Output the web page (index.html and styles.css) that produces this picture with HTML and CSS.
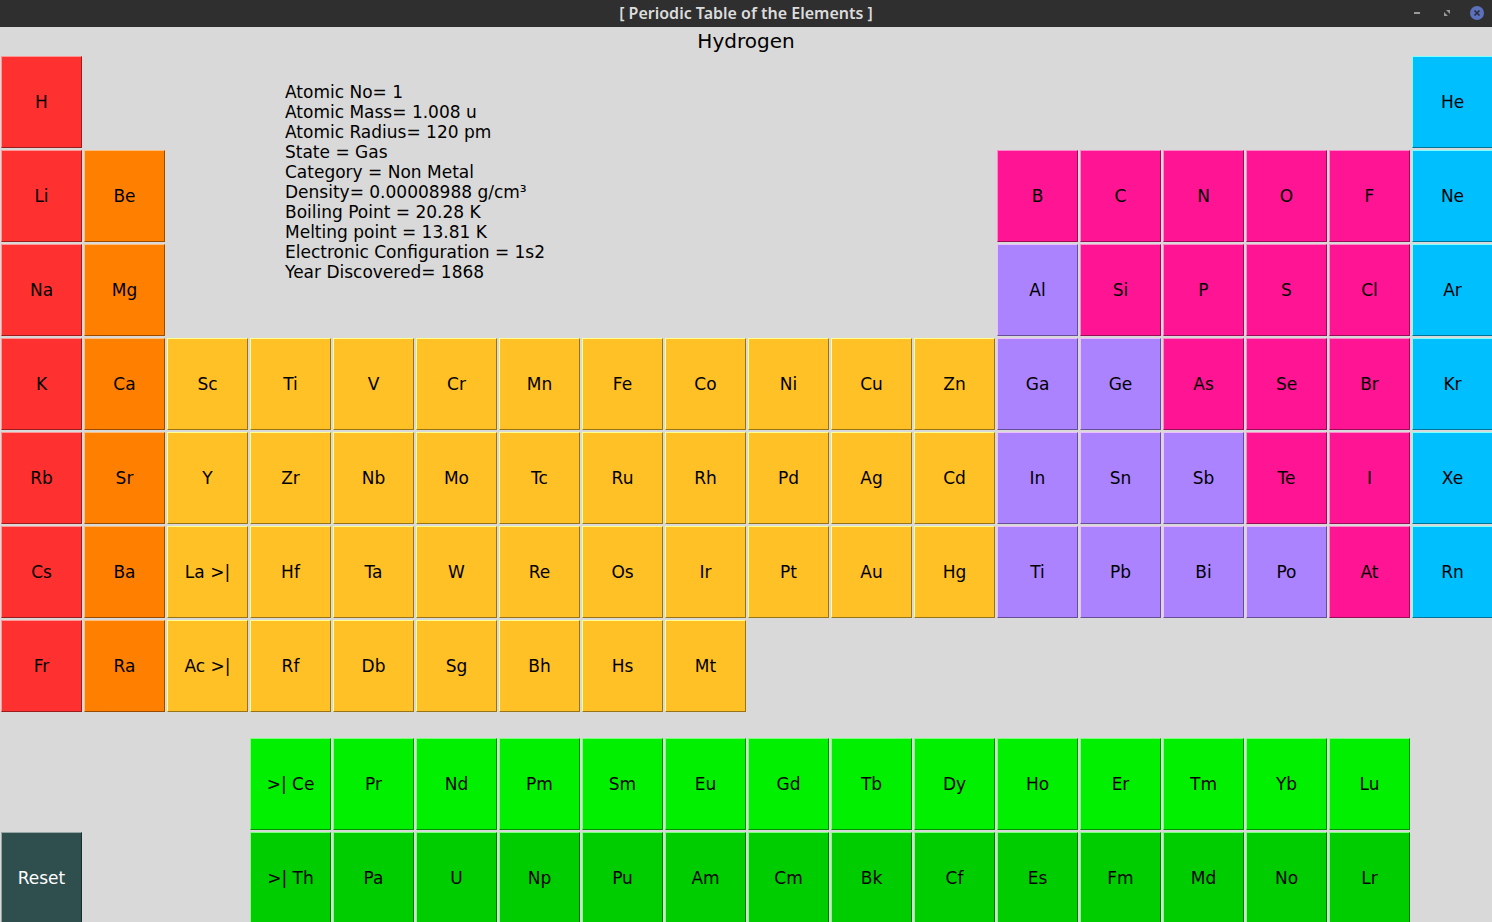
FILE: index.html
```html
<!DOCTYPE html>
<html lang="en">
<head>
<meta charset="utf-8">
<title>Periodic Table of the Elements</title>
<link rel="stylesheet" href="styles.css">
</head>
<body>
<header class="titlebar">
  <span class="title">[ Periodic Table of the Elements ]</span>
  <div class="controls">
    <button type="button" class="control" aria-label="Minimize"><svg width="14" height="14" viewBox="0 0 14 14"><path d="M4 6h6v2H4z" fill="#999"/></svg></button>
    <button type="button" class="control" aria-label="Maximize"><svg width="14" height="14" viewBox="0 0 14 14"><path d="M6 4h4v4zM4 6l4 4H4z" fill="#999"/></svg></button>
    <button type="button" class="control" aria-label="Close"><svg width="14" height="14" viewBox="0 0 14 14"><circle cx="7" cy="7" r="7" fill="#5c71bd"/><path d="M4.500 4.500l5 5M9.500 4.500l-5 5" stroke="#2a2d3a" stroke-width="1.700"/></svg></button>
  </div>
</header>
<main class="content">
  <h1 class="element-name">Hydrogen</h1>
  <section class="table">
    <div class="info">
      <p>Atomic No= 1</p>
      <p>Atomic Mass= 1.008 u</p>
      <p>Atomic Radius= 120 pm</p>
      <p>State = Gas</p>
      <p>Category = Non Metal</p>
      <p>Density= 0.00008988 g/cm³</p>
      <p>Boiling Point = 20.28 K</p>
      <p>Melting point = 13.81 K</p>
      <p>Electronic Configuration = 1s2</p>
      <p>Year Discovered= 1868</p>
    </div>
    <button type="button" class="cell alkali">H</button>
    <button type="button" class="cell noble col-18">He</button>

    <button type="button" class="cell alkali">Li</button>
    <button type="button" class="cell earth">Be</button>
    <button type="button" class="cell nonmetal col-13">B</button>
    <button type="button" class="cell nonmetal">C</button>
    <button type="button" class="cell nonmetal">N</button>
    <button type="button" class="cell nonmetal">O</button>
    <button type="button" class="cell nonmetal">F</button>
    <button type="button" class="cell noble">Ne</button>

    <button type="button" class="cell alkali">Na</button>
    <button type="button" class="cell earth">Mg</button>
    <button type="button" class="cell metal col-13">Al</button>
    <button type="button" class="cell nonmetal">Si</button>
    <button type="button" class="cell nonmetal">P</button>
    <button type="button" class="cell nonmetal">S</button>
    <button type="button" class="cell nonmetal">Cl</button>
    <button type="button" class="cell noble">Ar</button>

    <button type="button" class="cell alkali col-1">K</button>
    <button type="button" class="cell earth">Ca</button>
    <button type="button" class="cell transition">Sc</button>
    <button type="button" class="cell transition">Ti</button>
    <button type="button" class="cell transition">V</button>
    <button type="button" class="cell transition">Cr</button>
    <button type="button" class="cell transition">Mn</button>
    <button type="button" class="cell transition">Fe</button>
    <button type="button" class="cell transition">Co</button>
    <button type="button" class="cell transition">Ni</button>
    <button type="button" class="cell transition">Cu</button>
    <button type="button" class="cell transition">Zn</button>
    <button type="button" class="cell metal">Ga</button>
    <button type="button" class="cell metal">Ge</button>
    <button type="button" class="cell nonmetal">As</button>
    <button type="button" class="cell nonmetal">Se</button>
    <button type="button" class="cell nonmetal">Br</button>
    <button type="button" class="cell noble">Kr</button>

    <button type="button" class="cell alkali">Rb</button>
    <button type="button" class="cell earth">Sr</button>
    <button type="button" class="cell transition">Y</button>
    <button type="button" class="cell transition">Zr</button>
    <button type="button" class="cell transition">Nb</button>
    <button type="button" class="cell transition">Mo</button>
    <button type="button" class="cell transition">Tc</button>
    <button type="button" class="cell transition">Ru</button>
    <button type="button" class="cell transition">Rh</button>
    <button type="button" class="cell transition">Pd</button>
    <button type="button" class="cell transition">Ag</button>
    <button type="button" class="cell transition">Cd</button>
    <button type="button" class="cell metal">In</button>
    <button type="button" class="cell metal">Sn</button>
    <button type="button" class="cell metal">Sb</button>
    <button type="button" class="cell nonmetal">Te</button>
    <button type="button" class="cell nonmetal">I</button>
    <button type="button" class="cell noble">Xe</button>

    <button type="button" class="cell alkali">Cs</button>
    <button type="button" class="cell earth">Ba</button>
    <button type="button" class="cell transition">La &gt;|</button>
    <button type="button" class="cell transition">Hf</button>
    <button type="button" class="cell transition">Ta</button>
    <button type="button" class="cell transition">W</button>
    <button type="button" class="cell transition">Re</button>
    <button type="button" class="cell transition">Os</button>
    <button type="button" class="cell transition">Ir</button>
    <button type="button" class="cell transition">Pt</button>
    <button type="button" class="cell transition">Au</button>
    <button type="button" class="cell transition">Hg</button>
    <button type="button" class="cell metal">Ti</button>
    <button type="button" class="cell metal">Pb</button>
    <button type="button" class="cell metal">Bi</button>
    <button type="button" class="cell metal">Po</button>
    <button type="button" class="cell nonmetal">At</button>
    <button type="button" class="cell noble">Rn</button>

    <button type="button" class="cell alkali">Fr</button>
    <button type="button" class="cell earth">Ra</button>
    <button type="button" class="cell transition">Ac &gt;|</button>
    <button type="button" class="cell transition">Rf</button>
    <button type="button" class="cell transition">Db</button>
    <button type="button" class="cell transition">Sg</button>
    <button type="button" class="cell transition">Bh</button>
    <button type="button" class="cell transition">Hs</button>
    <button type="button" class="cell transition">Mt</button>
  </section>
  <section class="table series">
    <button type="button" class="cell lanthanide col-4">&gt;| Ce</button>
    <button type="button" class="cell lanthanide">Pr</button>
    <button type="button" class="cell lanthanide">Nd</button>
    <button type="button" class="cell lanthanide">Pm</button>
    <button type="button" class="cell lanthanide">Sm</button>
    <button type="button" class="cell lanthanide">Eu</button>
    <button type="button" class="cell lanthanide">Gd</button>
    <button type="button" class="cell lanthanide">Tb</button>
    <button type="button" class="cell lanthanide">Dy</button>
    <button type="button" class="cell lanthanide">Ho</button>
    <button type="button" class="cell lanthanide">Er</button>
    <button type="button" class="cell lanthanide">Tm</button>
    <button type="button" class="cell lanthanide">Yb</button>
    <button type="button" class="cell lanthanide">Lu</button>

    <button type="button" class="cell reset col-1">Reset</button>
    <button type="button" class="cell actinide col-4">&gt;| Th</button>
    <button type="button" class="cell actinide">Pa</button>
    <button type="button" class="cell actinide">U</button>
    <button type="button" class="cell actinide">Np</button>
    <button type="button" class="cell actinide">Pu</button>
    <button type="button" class="cell actinide">Am</button>
    <button type="button" class="cell actinide">Cm</button>
    <button type="button" class="cell actinide">Bk</button>
    <button type="button" class="cell actinide">Cf</button>
    <button type="button" class="cell actinide">Es</button>
    <button type="button" class="cell actinide">Fm</button>
    <button type="button" class="cell actinide">Md</button>
    <button type="button" class="cell actinide">No</button>
    <button type="button" class="cell actinide">Lr</button>
  </section>
</main>
</body>
</html>
```
FILE: styles.css
```css
* { box-sizing: border-box; }

body {
  margin: 0;
  height: 100vh;
  overflow: hidden;
  background: #d9d9d9;
  color: #000;
  font-family: "DejaVu Sans", sans-serif;
  font-size: 17px;
}

.titlebar {
  display: grid;
  grid-template-columns: 1fr auto 1fr;
  align-items: center;
  height: 27px;
  padding: 0 8px;
  background: #2f2f2f;
}

.title {
  grid-column: 2;
  color: #dcdcdc;
  font-family: "Noto Sans", sans-serif;
  font-size: 16px;
  font-weight: 600;
  line-height: 27px;
}

.controls {
  display: flex;
  justify-content: flex-end;
  gap: 16px;
  padding-bottom: 1px;
}

.control {
  display: flex;
  padding: 0;
  border: 0;
  background: none;
}

.element-name {
  margin: 0;
  font-size: 20px;
  font-weight: 400;
  line-height: 29px;
  text-align: center;
}

.table {
  display: grid;
  grid-template-columns: repeat(18, minmax(0, 1fr));
  grid-auto-rows: 92px;
  gap: 2px;
  margin-left: 1px;
  margin-right: -1px;
}

.series { margin-top: 26px; }

.info {
  grid-column: 4 / 13;
  grid-row: 1 / 4;
  padding: 26px 0 0 35px;
}

.info p {
  margin: 0;
  line-height: 20px;
}

.cell {
  padding: 0;
  border: 1px solid;
  color: #000;
  font: inherit;
}

.col-1 { grid-column-start: 1; }
.col-4 { grid-column-start: 4; }
.col-13 { grid-column-start: 13; }
.col-18 { grid-column-start: 18; }

.alkali { background: #ff3030; border-color: #ff9797 #991d1d #991d1d #ff9797; }
.earth { background: #ff8000; border-color: #ffbf7f #994c00 #994c00 #ffbf7f; }
.transition { background: #ffc125; border-color: #ffff92 #997416 #997416 #ffff92; }
.metal { background: #ab82ff; border-color: #efc0ff #674e99 #674e99 #efc0ff; }
.nonmetal { background: #ff1493; border-color: #ff89c9 #990c58 #990c58 #ff89c9; }
.noble { background: #00bfff; border-color: #7fffff #007399 #007399 #7fffff; }
.lanthanide { background: #00f000; border-color: #7fff7f #009000 #009000 #7fff7f; }
.actinide { background: #00cd00; border-color: #7fff7f #007b00 #007b00 #7fff7f; }
.reset { background: #2f4f4f; border-color: #97a7a7 #1c2f2f #1c2f2f #97a7a7; color: #fff; }
```
